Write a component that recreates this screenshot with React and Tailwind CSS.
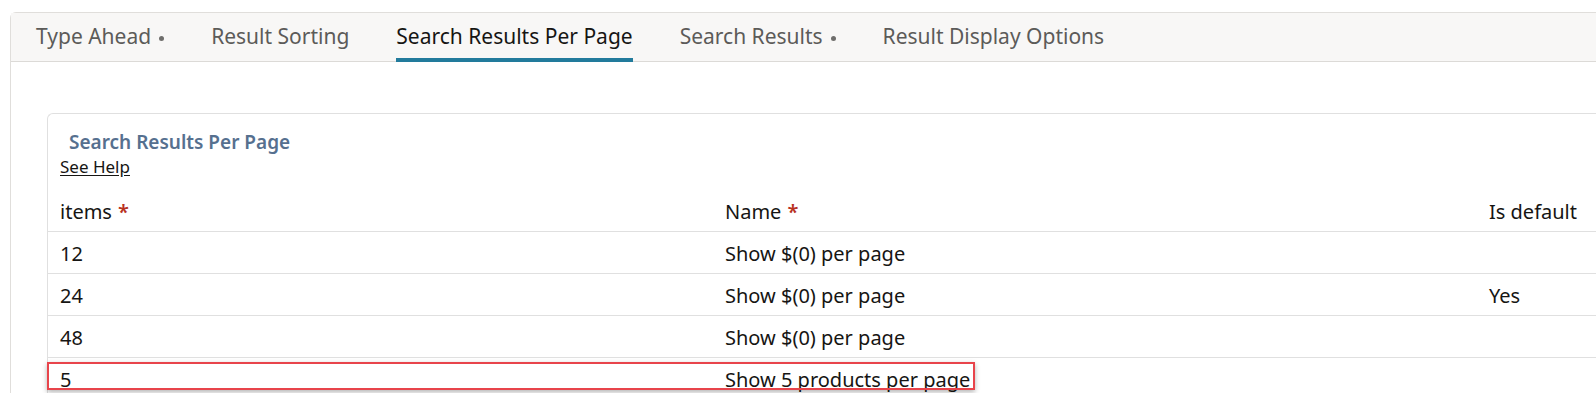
import React from "react";

const tabs = [
  { label: "Type Ahead", dot: true },
  { label: "Result Sorting" },
  { label: "Search Results Per Page", active: true },
  { label: "Search Results", dot: true },
  { label: "Result Display Options" },
];

const rows = [
  { items: "12", name: "Show $(0) per page", def: "" },
  { items: "24", name: "Show $(0) per page", def: "Yes" },
  { items: "48", name: "Show $(0) per page", def: "" },
  { items: "5", name: "Show 5 products per page", def: "", marked: true },
];

const Star = () => <span className="ml-[6px] font-semibold text-[#b8321f]">*</span>;

const App = () => {
  return (
    <div
      className="h-[393px] w-full overflow-hidden bg-white text-[#161513]"
      style={{ fontFamily: '"Noto Sans", "Open Sans", sans-serif' }}
    >
      <div className="pl-[10px] pt-[12px]">
        <div className="w-[1700px] rounded-tl-md border-l border-t border-[#e0dedb]">
          {/* tab bar */}
          <div className="flex h-[49px] gap-[47px] border-b border-[#dcdad7] bg-[#f8f7f6] pl-[25px]">
            {tabs.map((tab) => (
              <div
                key={tab.label}
                className={
                  "relative flex items-center text-[21px] " +
                  (tab.active ? "text-[#161513]" : "text-[#5c5b59]")
                }
              >
                <span>{tab.label}</span>
                {tab.dot && <span className="ml-[8px] mt-[3px] h-[5px] w-[5px] rounded-full bg-[#6f6e6c]" />}
                {tab.active && (
                  <span className="absolute bottom-[-1px] left-0 right-0 h-[4px] bg-[#227b9c]" />
                )}
              </div>
            ))}
          </div>

          {/* content */}
          <div className="pl-[36px] pt-[51px]">
            <div className="rounded-tl-md border-l border-t border-[#e0e0e0] pt-[16px]">
              <div className="h-[24px] pl-[21px] text-[19px] font-semibold leading-[24px] text-[#56708f]">
                Search Results Per Page
              </div>
              <div className="mt-[2px] h-[22px] pl-[12px] text-[17px] leading-[22px]">
                <a href="#" className="underline underline-offset-2">
                  See Help
                </a>
              </div>

              <div className="mt-[12px] flex h-[42px] items-center border-b border-[#e0e0e0] pt-[3px] text-[20px]">
                <div className="w-[665px] pl-[12px]">
                  items
                  <Star />
                </div>
                <div className="w-[764px] pl-[12px]">
                  Name
                  <Star />
                </div>
                <div className="flex-1 pl-[12px]">Is default</div>
              </div>

              {rows.map((row) => (
                <div
                  key={row.items}
                  className="relative flex h-[42px] items-center border-b border-[#e0e0e0] pt-[3px] text-[20px]"
                >
                  <div className="w-[665px] pl-[12px]">{row.items}</div>
                  <div className="w-[764px] pl-[12px]">{row.name}</div>
                  <div className="flex-1 pl-[12px]">{row.def}</div>
                  {row.marked && (
                    <div className="absolute left-[-1px] top-[4px] h-[28px] w-[928px] border-2 border-[#e8444b] shadow-[0_2px_5px_rgba(0,0,0,0.3)]" />
                  )}
                </div>
              ))}
            </div>
          </div>
        </div>
      </div>
    </div>
  );
};

export default App;
